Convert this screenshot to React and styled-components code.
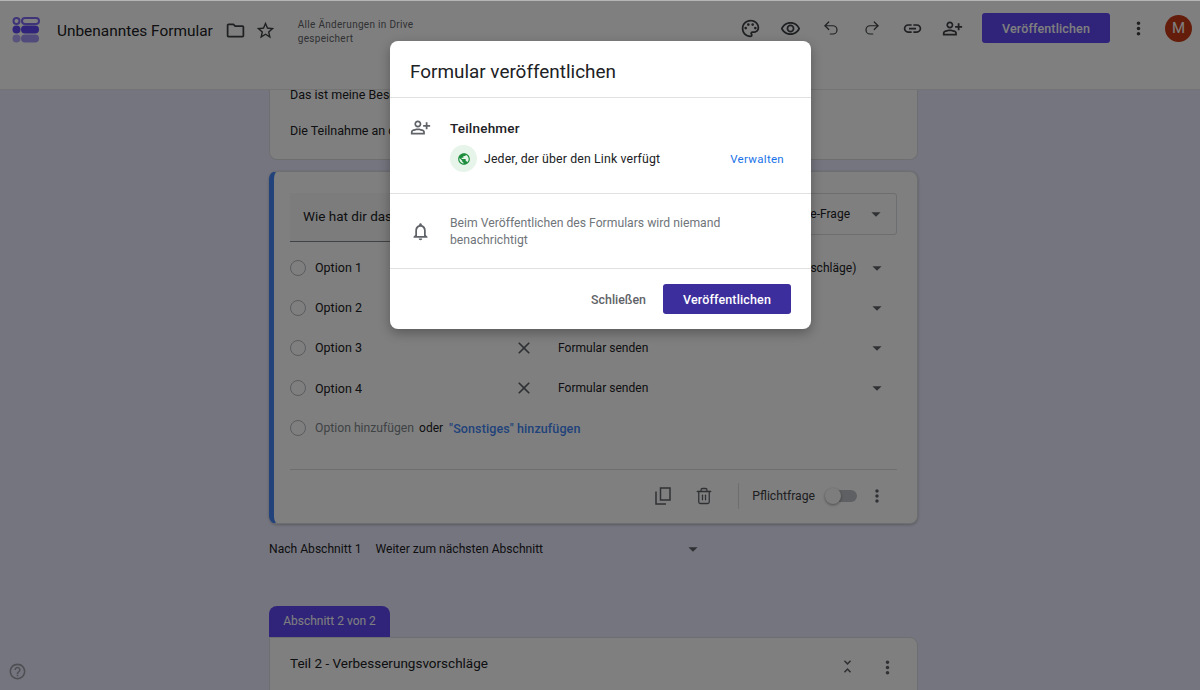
import React from 'react';
import styled, { createGlobalStyle } from 'styled-components';
import { Undo2, Redo2, Trash2 } from 'lucide-react';
import {
  MdOutlinePalette,
  MdOutlineRemoveRedEye,
  MdLink,
  MdOutlinePersonAddAlt,
  MdMoreVert,
  MdOutlineFolder,
  MdStarBorder,
  MdOutlineNotifications,
  MdPublic,
  MdClose,
  MdArrowDropDown,
  MdHelpOutline,
  MdOutlineUnfoldLess,
} from 'react-icons/md';

const GlobalStyle = createGlobalStyle`
  html, body {
    margin: 0;
    padding: 0;
    height: 100%;
    overflow: hidden;
    font-family: Roboto, "Liberation Sans", sans-serif;
  }
`;

const Page = styled.div`
  position: relative;
  width: 1200px;
  height: 690px;
  overflow: hidden;
  background: #ebebff;
  color: #202124;
  font-size: 12.5px;
`;

const Header = styled.header`
  height: 90px;
  box-sizing: border-box;
  background: #fff;
  border-bottom: 1px solid #e8e8e8;
  display: flex;
  align-items: flex-start;
  padding: 13px 8px 0 12px;
`;

const Logo = styled.svg`
  width: 28px;
  height: 26px;
  margin: 4px 17px 0 0;
  flex: none;
`;

const Title = styled.div`
  font-size: 15.4px;
  line-height: 36px;
  margin-right: 8px;
`;

const HeaderIcon = styled.span`
  display: flex;
  align-items: center;
  justify-content: center;
  width: ${(p) => p.$w || 30}px;
  height: 34px;
  font-size: ${(p) => p.$size || 21}px;
  color: #3c4043;
  flex: none;
`;

const SaveNote = styled.div`
  width: 140px;
  margin-left: 17px;
  font-size: 10px;
  line-height: 14px;
  letter-spacing: 0.3px;
  color: #5f6368;
  padding-top: 5px;
`;

const HeaderActions = styled.div`
  margin: -2px 0 0 auto;
  display: flex;
  align-items: center;
`;

const HeaderPublish = styled.div`
  width: 128px;
  height: 30px;
  margin: 0 13px 0 9px;
  border-radius: 3px;
  background: #5e48f2;
  color: #fff;
  font-size: 12.5px;
  font-weight: 500;
  letter-spacing: 0.15px;
  display: flex;
  align-items: center;
  justify-content: center;
`;

const Avatar = styled.div`
  width: 27px;
  height: 27px;
  margin-left: 12px;
  border-radius: 50%;
  background: #c93a14;
  color: #fff;
  font-size: 15px;
  display: flex;
  align-items: center;
  justify-content: center;
`;

const Column = styled.main`
  width: 649px;
  margin-left: 269px;
  display: flex;
  flex-direction: column;
`;

const Card = styled.section`
  background: #fff;
  border: 1px solid #dadce0;
  border-radius: 8px;
  box-sizing: border-box;
`;

const IntroCard = styled(Card)`
  height: 70px;
  border-top: 0;
  border-radius: 0 0 8px 8px;
  padding: 0 20px;
  margin-bottom: 11px;
  white-space: nowrap;
`;

const IntroLine = styled.div`
  margin-top: ${(p) => p.$top}px;
  line-height: 14px;
`;

const QuestionCard = styled(Card)`
  height: 353px;
  border-left: 5px solid #4285f4;
  padding: 21px 20px 0 16px;
  box-shadow: 0 1px 3px rgba(0, 0, 0, 0.25);
  display: flex;
  flex-direction: column;
`;

const QuestionTop = styled.div`
  display: flex;
  justify-content: space-between;
  align-items: flex-start;
  margin-bottom: 5.8px;
`;

const QuestionInput = styled.div`
  width: 330px;
  height: 49px;
  box-sizing: border-box;
  padding-left: 13px;
  background: #f8f9fa;
  border-bottom: 1px solid #80868b;
  font-size: 13.5px;
  line-height: 47px;
  white-space: nowrap;
`;

const TypeSelect = styled.div`
  width: 200px;
  height: 42px;
  box-sizing: border-box;
  border: 1px solid #dadce0;
  border-radius: 3px;
  display: flex;
  align-items: center;
  justify-content: flex-end;
  padding-right: 9px;
  font-size: 12px;
  gap: 15px;
`;

const Caret = styled(MdArrowDropDown)`
  font-size: 22px;
  color: #5f6368;
  flex: none;
`;

const OptionRow = styled.div`
  display: grid;
  grid-template-columns: 25px 199px 20px 363px;
  align-items: center;
  height: 40.4px;
`;

const Radio = styled.span`
  width: 16px;
  height: 16px;
  box-sizing: border-box;
  border: 1.5px solid #b4b8bd;
  border-radius: 50%;
`;

const OptionName = styled.span`
  font-size: 12.5px;
  white-space: nowrap;
`;

const RemoveIcon = styled(MdClose)`
  font-size: 20px;
  color: #5f6368;
`;

const Target = styled.div`
  display: flex;
  align-items: center;
  justify-content: space-between;
  padding: 0 9px 0 24px;
  white-space: nowrap;
  font-size: 12.05px;
`;

const AddRow = styled.div`
  display: flex;
  align-items: center;
  height: 40.4px;
  white-space: nowrap;
`;

const AddHint = styled.span`
  margin-left: 9px;
  font-size: 12.2px;
  color: #80868b;
`;

const AddOr = styled.span`
  margin-left: 5px;
  font-size: 12px;
  color: #202124;
`;

const AddOther = styled.span`
  margin-left: 6px;
  color: #4285f4;
  font-weight: 500;
  letter-spacing: 0.1px;
`;

const QuestionFooter = styled.div`
  margin-top: 21.2px;
  border-top: 1px solid #dadce0;
  height: 52px;
  display: flex;
  align-items: center;
  justify-content: flex-end;
  padding: 0 10px 1px 0;
  font-size: 12.2px;
  color: #3c4043;
`;

const FooterIcon = styled.span`
  display: flex;
  justify-content: center;
  width: 20px;
  font-size: 20px;
  color: #5f6368;
  margin-right: ${(p) => p.$gap || 0}px;
`;

const CopyGlyph = styled.svg`
  width: 16px;
  height: 18px;
  fill: none;
  stroke: currentColor;
  stroke-width: 1.5;
`;

const FooterDivider = styled.span`
  width: 1px;
  height: 26px;
  background: #dadce0;
  margin: 0 13px 0 24px;
`;

const Switch = styled.span`
  position: relative;
  display: block;
  width: 32px;
  height: 12px;
  margin: 0 10px 0 10px;
`;

const SwitchTrack = styled.span`
  position: absolute;
  right: 0;
  top: 0;
  width: 28px;
  height: 12px;
  border-radius: 6px;
  background: #bdc1c6;
`;

const SwitchKnob = styled.span`
  position: absolute;
  left: 0;
  top: -2px;
  width: 16px;
  height: 16px;
  border-radius: 50%;
  background: #fafafa;
  box-shadow: 0 1px 3px rgba(0, 0, 0, 0.4);
`;

const NextRow = styled.div`
  display: flex;
  align-items: center;
  height: 50px;
  margin-bottom: 32px;
  white-space: nowrap;
  font-size: 12.1px;
`;

const NextTarget = styled.div`
  width: 329px;
  margin-left: 14px;
  display: flex;
  align-items: center;
  justify-content: space-between;
`;

const SectionTab = styled.div`
  width: 121px;
  height: 31px;
  padding-bottom: 2px;
  box-sizing: border-box;
  border-radius: 8px 8px 0 0;
  background: #5e48f2;
  color: #fff;
  font-size: 12px;
  display: flex;
  align-items: center;
  justify-content: center;
`;

const SectionCard = styled(Card)`
  height: 70px;
  padding: 0 20px;
  border-radius: 0 8px 0 0;
  display: flex;
  align-items: flex-start;
  font-size: 13.5px;
  line-height: 50px;
`;

const SectionActions = styled.div`
  margin: 0 -1px 0 auto;
  display: flex;
  gap: 18px;
  padding-top: 19px;
  color: #5f6368;
`;

const SectionIcon = styled.span`
  display: flex;
  justify-content: center;
  width: 22px;
  font-size: ${(p) => p.$size}px;
`;

const HelpIcon = styled(MdHelpOutline)`
  position: absolute;
  left: 7.5px;
  bottom: 9.5px;
  font-size: 19px;
  color: #9aa0a6;
`;

const Scrim = styled.div`
  position: absolute;
  inset: 0;
  background: rgba(0, 0, 0, 0.5);
  border-top: 1px solid #b5b5b5;
  box-sizing: border-box;
`;

const Dialog = styled.div`
  position: absolute;
  left: 390px;
  top: 41px;
  width: 421px;
  height: 288px;
  background: #fff;
  border-radius: 8px;
  box-shadow: 0 4px 12px rgba(0, 0, 0, 0.3);
  display: flex;
  flex-direction: column;
`;

const DialogTitle = styled.h2`
  margin: 0;
  height: 57px;
  box-sizing: border-box;
  padding: 20px 20px 0;
  border-bottom: 1px solid #e0e0e0;
  font-size: 18.9px;
  line-height: 22px;
  font-weight: 400;
  color: #202124;
`;

const Participants = styled.div`
  height: 96px;
  box-sizing: border-box;
  border-bottom: 1px solid #e0e0e0;
  padding: 19px 27px 0 20px;
  display: grid;
  grid-template-columns: 40px 1fr;
`;

const RowIcon = styled.span`
  display: flex;
  font-size: 21px;
  color: #5f6368;
`;

const ParticipantsLabel = styled.div`
  font-size: 13.5px;
  font-weight: 500;
  line-height: 22px;
  letter-spacing: 0.2px;
`;

const AccessRow = styled.div`
  display: flex;
  align-items: center;
  margin-top: 6px;
  font-size: 12.3px;
  letter-spacing: 0.15px;
`;

const GlobeBadge = styled.span`
  width: 27px;
  height: 27px;
  margin-right: 7px;
  border-radius: 50%;
  background: #e6f4ea;
  color: #1e8e3e;
  font-size: 14px;
  display: flex;
  align-items: center;
  justify-content: center;
`;

const ManageLink = styled.span`
  margin-left: auto;
  color: #1a73e8;
  font-size: 11.5px;
  letter-spacing: 0.3px;
`;

const NoticeRow = styled.div`
  height: 75px;
  box-sizing: border-box;
  border-bottom: 1px solid #e0e0e0;
  padding: 1px 70px 0 20px;
  display: grid;
  grid-template-columns: 40px 1fr;
  align-items: center;
  font-size: 12.2px;
  line-height: 17px;
  color: #70757a;
`;

const DialogFooter = styled.div`
  flex: 1;
  display: flex;
  align-items: center;
  justify-content: flex-end;
  padding: 0 20px 0 0;
  gap: 17px;
`;

const CloseButton = styled.span`
  color: #5f6368;
  font-size: 12.4px;
  font-weight: 500;
`;

const PublishButton = styled.span`
  width: 128px;
  height: 30px;
  border-radius: 3px;
  background: #3c2e9c;
  color: #fff;
  font-size: 12.5px;
  font-weight: 500;
  letter-spacing: 0.15px;
  display: flex;
  align-items: center;
  justify-content: center;
`;

const options = [
  { name: 'Option 1', target: 'Weiter zu Abschnitt 2 (Teil 2: Verbesserungsvorschläge)' },
  { name: 'Option 2', target: 'Formular senden' },
  { name: 'Option 3', target: 'Formular senden' },
  { name: 'Option 4', target: 'Formular senden' },
];

function FormsLogo() {
  return (
    <Logo viewBox="0 0 28 26">
      <circle cx="4.5" cy="4" r="3" fill="none" stroke="#7a68f5" strokeWidth="2" />
      <rect x="10" y="1" width="17" height="6" rx="3" fill="none" stroke="#7a68f5" strokeWidth="2" />
      <circle cx="4.5" cy="12.5" r="4" fill="#5e48f2" />
      <rect x="9" y="8.5" width="18" height="8" rx="4" fill="#5e48f2" />
      <circle cx="4.5" cy="21.5" r="4" fill="#b3a8fa" />
      <rect x="9" y="17.5" width="18" height="8" rx="4" fill="#a396f9" />
    </Logo>
  );
}

export default function App() {
  return (
    <Page>
      <GlobalStyle />
      <Header>
        <FormsLogo />
        <Title>Unbenanntes Formular</Title>
        <HeaderIcon><MdOutlineFolder /></HeaderIcon>
        <HeaderIcon><MdStarBorder /></HeaderIcon>
        <SaveNote>Alle Änderungen in Drive gespeichert</SaveNote>
        <HeaderActions>
          <HeaderIcon $w={40}><MdOutlinePalette /></HeaderIcon>
          <HeaderIcon $w={41}><MdOutlineRemoveRedEye /></HeaderIcon>
          <HeaderIcon $w={40}><Undo2 size={18} strokeWidth={1.6} /></HeaderIcon>
          <HeaderIcon $w={41}><Redo2 size={18} strokeWidth={1.6} /></HeaderIcon>
          <HeaderIcon $w={40}><MdLink /></HeaderIcon>
          <HeaderIcon $w={41}><MdOutlinePersonAddAlt /></HeaderIcon>
          <HeaderPublish>Veröffentlichen</HeaderPublish>
          <HeaderIcon $w={30}><MdMoreVert /></HeaderIcon>
          <Avatar>M</Avatar>
        </HeaderActions>
      </Header>

      <Column>
        <IntroCard>
          <IntroLine $top={-2}>Das ist meine Beschreibung des Formulars.</IntroLine>
          <IntroLine $top={22}>Die Teilnahme an der Umfrage ist freiwillig.</IntroLine>
        </IntroCard>

        <QuestionCard>
          <QuestionTop>
            <QuestionInput>Wie hat dir das Event gefallen?</QuestionInput>
            <TypeSelect>
              Multiple-Choice-Frage
              <Caret />
            </TypeSelect>
          </QuestionTop>

          {options.map((option) => (
            <OptionRow key={option.name}>
              <Radio />
              <OptionName>{option.name}</OptionName>
              <RemoveIcon />
              <Target>
                {option.target}
                <Caret />
              </Target>
            </OptionRow>
          ))}

          <AddRow>
            <Radio />
            <AddHint>Option hinzufügen</AddHint>
            <AddOr>oder</AddOr>
            <AddOther>"Sonstiges" hinzufügen</AddOther>
          </AddRow>

          <QuestionFooter>
            <FooterIcon $gap={21}>
              <CopyGlyph viewBox="0 0 16 18">
                <path d="M5.5 1h9.5v12H5.5z" />
                <path d="M1 4.5V17h10" />
              </CopyGlyph>
            </FooterIcon>
            <FooterIcon><Trash2 size={18} strokeWidth={1.7} /></FooterIcon>
            <FooterDivider />
            Pflichtfrage
            <Switch>
              <SwitchTrack />
              <SwitchKnob />
            </Switch>
            <FooterIcon><MdMoreVert /></FooterIcon>
          </QuestionFooter>
        </QuestionCard>

        <NextRow>
          Nach Abschnitt 1
          <NextTarget>
            Weiter zum nächsten Abschnitt
            <Caret />
          </NextTarget>
        </NextRow>

        <SectionTab>Abschnitt 2 von 2</SectionTab>
        <SectionCard>
          Teil 2 - Verbesserungsvorschläge
          <SectionActions>
            <SectionIcon $size={19}><MdOutlineUnfoldLess /></SectionIcon>
            <SectionIcon $size={21}><MdMoreVert /></SectionIcon>
          </SectionActions>
        </SectionCard>
      </Column>

      <HelpIcon />
      <Scrim />

      <Dialog>
        <DialogTitle>Formular veröffentlichen</DialogTitle>
        <Participants>
          <RowIcon><MdOutlinePersonAddAlt /></RowIcon>
          <div>
            <ParticipantsLabel>Teilnehmer</ParticipantsLabel>
            <AccessRow>
              <GlobeBadge><MdPublic /></GlobeBadge>
              Jeder, der über den Link verfügt
              <ManageLink>Verwalten</ManageLink>
            </AccessRow>
          </div>
        </Participants>
        <NoticeRow>
          <RowIcon><MdOutlineNotifications /></RowIcon>
          <div>Beim Veröffentlichen des Formulars wird niemand benachrichtigt</div>
        </NoticeRow>
        <DialogFooter>
          <CloseButton>Schließen</CloseButton>
          <PublishButton>Veröffentlichen</PublishButton>
        </DialogFooter>
      </Dialog>
    </Page>
  );
}
